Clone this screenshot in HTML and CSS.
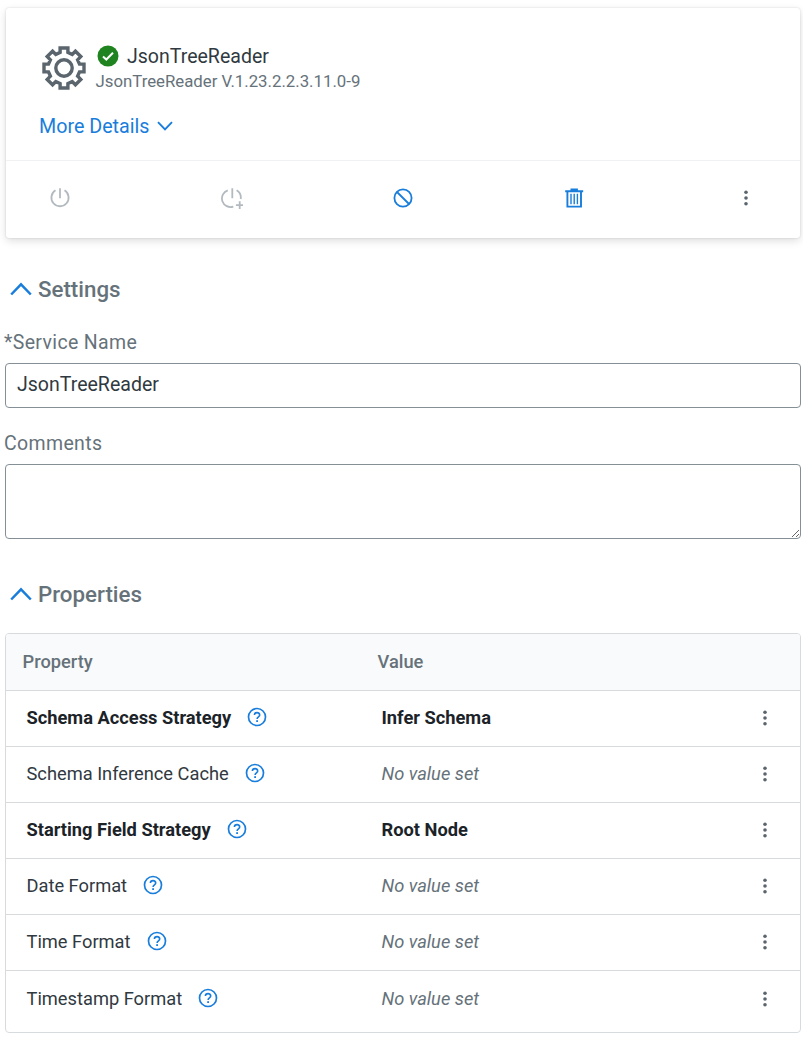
FILE: index.html
```html
<!DOCTYPE html>
<html lang="en">
<head>
<meta charset="utf-8">
<title>JsonTreeReader</title>
<link rel="stylesheet" href="styles.css">
</head>
<body>
<svg class="defs" width="0" height="0" aria-hidden="true">
  <symbol id="help" viewBox="0 0 20 20"><circle cx="10" cy="10" r="8.5" fill="none" stroke="currentColor" stroke-width="1.7"/><path d="M7.4 8.1C7.4 4.7 12.7 4.8 12.7 8C12.7 9.9 10.1 9.9 10.1 12" fill="none" stroke="currentColor" stroke-width="1.6"/><rect x="9.2" y="13.2" width="1.8" height="1.8" fill="currentColor"/></symbol>
  <symbol id="dots" viewBox="0 0 6 18"><circle cx="3" cy="3.2" r="1.8" fill="currentColor"/><circle cx="3" cy="9" r="1.8" fill="currentColor"/><circle cx="3" cy="14.8" r="1.8" fill="currentColor"/></symbol>
  <symbol id="up" viewBox="0 0 22 14"><path d="M1.2 12.5L11 2.3L20.8 12.5" fill="none" stroke="currentColor" stroke-width="2.5"/></symbol>
</svg>
<main class="page">
  <section class="card">
    <div class="summary">
      <div class="identity">
        <svg class="gear" viewBox="0 0 44 44"><path d="M18.1 6.5V2H25.9V6.5L30.2 8.4L33.4 5.2L38.8 10.6L35.6 13.8L37.5 18.1H42V25.9H37.5L35.6 30.2L38.8 33.4L33.4 38.8L30.2 35.6L25.9 37.5V42H18.1V37.5L13.8 35.6L10.6 38.8L5.2 33.4L8.4 30.2L6.5 25.9H2V18.1H6.5L8.4 13.8L5.2 10.6L10.6 5.2L13.8 8.4Z" fill="none" stroke="currentColor" stroke-width="3.4"/><circle cx="22" cy="22" r="8.2" fill="none" stroke="currentColor" stroke-width="3.4"/></svg>
        <div class="names">
          <div class="title"><svg class="check" viewBox="0 0 22 22"><circle cx="11" cy="11" r="10.5" fill="#1f8420"/><path d="M6 11.5L9.3 14.5L16 7.8" fill="none" stroke="#fff" stroke-width="2"/></svg><span>JsonTreeReader</span></div>
          <div class="version">JsonTreeReader V.1.23.2.2.3.11.0-9</div>
        </div>
      </div>
      <a class="more"><span>More Details</span><svg class="down" viewBox="0 0 16 10"><path d="M1 1.2L8 8.3L15 1.2" fill="none" stroke="currentColor" stroke-width="1.9"/></svg></a>
    </div>
    <div class="actions">
      <svg class="action muted" viewBox="0 0 22 22"><path d="M6.5 3.3A8.6 8.6 0 1 0 15.5 3.3M11 1.2V11.2" fill="none" stroke="currentColor" stroke-width="1.8"/></svg>
      <svg class="action muted" viewBox="0 0 22 22"><path d="M6.8 3.3A8.6 8.6 0 0 0 12.3 19.6M15.6 3.3A8.6 8.6 0 0 1 19.7 12M11.3 1.2V11.2M18.7 14.2V22M14.9 18.1H22" fill="none" stroke="currentColor" stroke-width="1.8"/></svg>
      <svg class="action blue" viewBox="0 0 22 22"><circle cx="11" cy="11" r="8.6" fill="none" stroke="currentColor" stroke-width="1.8"/><path d="M5 5L17 17" stroke="currentColor" stroke-width="1.8"/></svg>
      <svg class="action blue" viewBox="0 0 22 22"><path d="M1.2 4.2H19.2M6.5 2.4H13.9M3.4 4.2V19.6H17V4.2" fill="none" stroke="currentColor" stroke-width="1.9"/><path d="M7 6.8V17.2M10.2 6.8V17.2M13.4 6.8V17.2" stroke="currentColor" stroke-width="1.4"/></svg>
      <span class="action slot"><svg class="dots"><use href="#dots"/></svg></span>
    </div>
  </section>

  <h2 class="heading"><svg class="caret"><use href="#up"/></svg><span>Settings</span></h2>
  <label class="label" for="name">*Service Name</label>
  <input class="field" id="name" value="JsonTreeReader">
  <label class="label second" for="comments">Comments</label>
  <textarea class="field area" id="comments"></textarea>

  <h2 class="heading props"><svg class="caret"><use href="#up"/></svg><span>Properties</span></h2>
  <div class="table">
    <div class="row head"><span>Property</span><span>Value</span></div>
    <div class="row required"><div class="prop"><span>Schema Access Strategy</span><svg class="help"><use href="#help"/></svg></div><span class="value">Infer Schema</span><svg class="dots"><use href="#dots"/></svg></div>
    <div class="row"><div class="prop"><span>Schema Inference Cache</span><svg class="help"><use href="#help"/></svg></div><span class="value unset">No value set</span><svg class="dots"><use href="#dots"/></svg></div>
    <div class="row required"><div class="prop"><span>Starting Field Strategy</span><svg class="help"><use href="#help"/></svg></div><span class="value">Root Node</span><svg class="dots"><use href="#dots"/></svg></div>
    <div class="row"><div class="prop"><span>Date Format</span><svg class="help"><use href="#help"/></svg></div><span class="value unset">No value set</span><svg class="dots"><use href="#dots"/></svg></div>
    <div class="row"><div class="prop"><span>Time Format</span><svg class="help"><use href="#help"/></svg></div><span class="value unset">No value set</span><svg class="dots"><use href="#dots"/></svg></div>
    <div class="row last"><div class="prop"><span>Timestamp Format</span><svg class="help"><use href="#help"/></svg></div><span class="value unset">No value set</span><svg class="dots"><use href="#dots"/></svg></div>
  </div>
</main>
</body>
</html>
```
FILE: styles.css
```css
* { box-sizing: border-box; }
body { margin: 0; background: #fff; color: #30393f; font-family: Roboto, "Liberation Sans", sans-serif; font-size: 18.27px; overflow: hidden; }
.defs { display: none; }
svg { display: block; flex: none; }
.page { display: flex; flex-direction: column; padding: 8px 2px 0 5px; }
.card { height: 230px; margin: 0 1px; border-radius: 3px; box-shadow: 0 0 2px rgba(0, 0, 0, .16), 0 3px 9px rgba(0, 0, 0, .13); }
.summary { height: 153px; padding: 36px 33px 0; border-bottom: 1px solid #f0f1f2; }
.identity { display: flex; gap: 8.5px; height: 62px; }
.gear { width: 44px; height: 44px; margin: 1.5px 0 0 3px; color: #5a656d; }
.title { display: flex; align-items: center; gap: 8px; height: 24px; font-size: 19.55px; }
.check { width: 22px; height: 22px; margin-left: 2.5px; }
.version { height: 26px; line-height: 27px; margin-left: 1px; font-size: 16.8px; color: #66727a; }
.more { display: flex; align-items: center; gap: 8px; height: 40px; font-size: 19.7px; color: #187ddb; }
.down { width: 16px; height: 10px; }
.actions { display: flex; justify-content: space-between; align-items: center; height: 74px; padding: 0 43px; }
.action { width: 22px; height: 22px; }
.slot { display: flex; align-items: center; justify-content: center; }
.muted { color: #b3babf; }
.blue { color: #187ddb; }
.dots { width: 6px; height: 18px; color: #5a656d; }
.heading { display: flex; align-items: center; gap: 6px; height: 30px; margin: 36px 0 0 5px; font-size: 22.3px; font-weight: 500; color: #66727a; }
.heading span { margin-top: -1px; }
.caret { width: 22px; height: 14px; color: #187ddb; }
.label { height: 28px; line-height: 28px; margin: 25px 0 0 -1px; font-size: 19.5px; letter-spacing: .35px; color: #66727a; }
.field { width: 100%; height: 45px; margin-top: 6px; padding: 0 11px 3px; border: 1px solid #858f96; border-radius: 4px; background: #fff; color: #30393f; font: 19.55px Roboto, "Liberation Sans", sans-serif; outline: 0; }
.second { margin-top: 22px; }
.area { height: 75px; resize: vertical; }
.props { margin-top: 40px; }
.table { margin-top: 24px; border: 1px solid #d8dbde; border-radius: 4px; overflow: hidden; }
.row { display: grid; grid-template-columns: 355px 380px 6px; align-items: center; height: 56px; padding: 0 0 3px 20.5px; border-bottom: 1px solid #d8dbde; }
.row .dots { margin-top: 1px; }
.head { height: 57px; padding: 0 0 2px 16.5px; background: #f9fafc; color: #66727a; font-weight: 500; }
.prop { display: flex; align-items: center; gap: 16px; }
.help { width: 20px; height: 20px; color: #187ddb; }
.required { color: #1b2329; font-weight: 700; }
.unset { color: #66727a; font-style: italic; }
.last { height: 61px; padding-bottom: 7px; border-bottom: 0; }
```
